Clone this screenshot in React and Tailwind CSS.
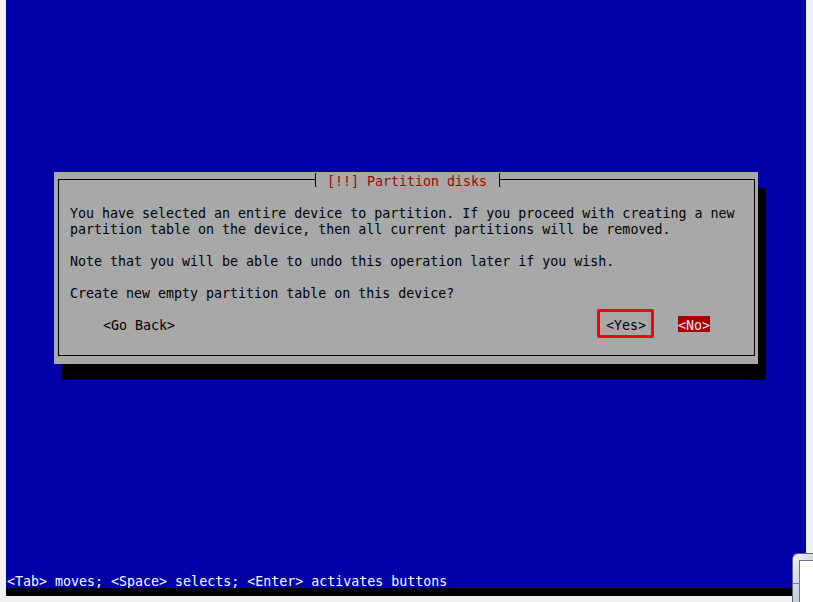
import React from "react";

const mono = "font-['DejaVu_Sans_Mono','Liberation_Mono',monospace] text-[13.3px]";

const DialogText = ({ children }) => (
  <div className={`h-4 leading-[20px] whitespace-pre text-black ${mono}`}>{children}</div>
);

const Blank = () => <div className="h-4" />;

const PartitionDialog = () => {
  return (
    <div className="w-[704px] h-[192px] bg-[#a8a8a8] shadow-[8px_16px_0_0_#000] flex flex-col">
      {/* frame */}
      <div className="ml-[4px] mt-[7px] w-[697px] h-[177px] border-l border-r border-b border-black flex flex-col">
        {/* top line with title */}
        <div className="h-px flex items-center">
          <div className="w-[256px] h-px bg-black" />
          <div className="w-px h-[14px] bg-black" />
          <div
            className={`w-[183px] h-4 leading-[20px] pl-[11px] whitespace-pre text-[#a80000] ${mono}`}
          >
            [!!] Partition disks
          </div>
          <div className="w-px h-[14px] bg-black" />
          <div className="flex-1 h-px bg-black" />
        </div>

        {/* body */}
        <div className="pt-[24px] pl-[11px] flex flex-col">
          <DialogText>
            You have selected an entire device to partition. If you proceed with creating a new
          </DialogText>
          <DialogText>
            partition table on the device, then all current partitions will be removed.
          </DialogText>
          <Blank />
          <DialogText>Note that you will be able to undo this operation later if you wish.</DialogText>
          <Blank />
          <DialogText>Create new empty partition table on this device?</DialogText>
          <Blank />

          {/* buttons */}
          <div className={`h-4 flex items-start whitespace-pre text-black ${mono}`}>
            <span className="ml-[33px] h-4 leading-[20px]">&lt;Go Back&gt;</span>
            <span className="ml-[422px] -mt-[7px] -mb-[6px] -mr-[8px] border-[3px] border-[#ff0000] rounded-[2px] pt-[4px] pb-[3px] pl-[6px] pr-[5px] leading-[20px]">
              <span className="block h-4">&lt;Yes&gt;</span>
            </span>
            <span className="ml-[32px] h-4 leading-[20px] bg-[#a80000] text-[#ececec]">&lt;No&gt;</span>
          </div>
        </div>
      </div>
    </div>
  );
};

const WindowCorner = () => (
  <div className="absolute left-[792px] top-[553px] w-[40px] h-[60px] rounded-tl-[6px] border border-[#5c6070] bg-gradient-to-br from-[#eef0f6] via-[#c4c8d8] to-[#8c92ac] pl-[6px] pt-[6px]">
    <div className="w-full h-full border-l border-t border-[#6c7088] bg-white" />
    <div className="absolute left-0 top-[29px] w-[7px] h-px bg-[#7a7f96]" />
  </div>
);

export default function App() {
  return (
    <div className="relative w-[813px] h-[602px] bg-[#f0f0f0] overflow-hidden">
      <div className="ml-[6px] -mt-[4px] w-[800px] h-[600px] bg-[#0000a8] flex flex-col">
        <div className="h-[176px]" />
        <div className="pl-[48px]">
          <PartitionDialog />
        </div>
        <div className="flex-1" />
        <div className={`h-4 leading-[20px] pl-px whitespace-pre text-white ${mono}`}>
          &lt;Tab&gt; moves; &lt;Space&gt; selects; &lt;Enter&gt; activates buttons
        </div>
        <div className="h-[8px] bg-black" />
      </div>
      <WindowCorner />
    </div>
  );
}
